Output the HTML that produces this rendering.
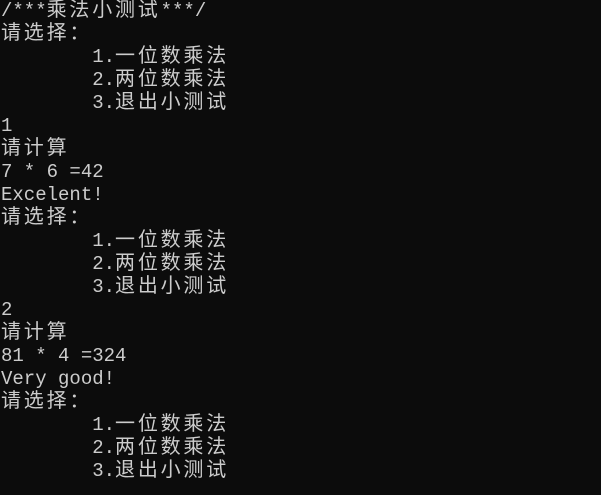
<!DOCTYPE html>
<html><head><meta charset="utf-8"><style>
html,body{margin:0;padding:0;background:#0c0c0c;width:601px;height:495px;overflow:hidden}
#t{padding:0 0 0 1px;color:#cccccc;font-family:"Liberation Mono",monospace;font-size:19px}
#t div{height:23px;line-height:23px;white-space:pre;overflow:visible}
.c{font-family:"Noto Sans CJK SC",sans-serif;font-size:20px;letter-spacing:2.8px;line-height:0}
</style></head><body><div id="t">
<div>/***<span class="c">乘法小测试</span>***/</div>
<div><span class="c">请选择：</span></div>
<div>        1.<span class="c">一位数乘法</span></div>
<div>        2.<span class="c">两位数乘法</span></div>
<div>        3.<span class="c">退出小测试</span></div>
<div>1</div>
<div><span class="c">请计算</span></div>
<div>7 * 6 =42</div>
<div>Excelent!</div>
<div><span class="c">请选择：</span></div>
<div>        1.<span class="c">一位数乘法</span></div>
<div>        2.<span class="c">两位数乘法</span></div>
<div>        3.<span class="c">退出小测试</span></div>
<div>2</div>
<div><span class="c">请计算</span></div>
<div>81 * 4 =324</div>
<div>Very good!</div>
<div><span class="c">请选择：</span></div>
<div>        1.<span class="c">一位数乘法</span></div>
<div>        2.<span class="c">两位数乘法</span></div>
<div>        3.<span class="c">退出小测试</span></div>
</div></body></html>
